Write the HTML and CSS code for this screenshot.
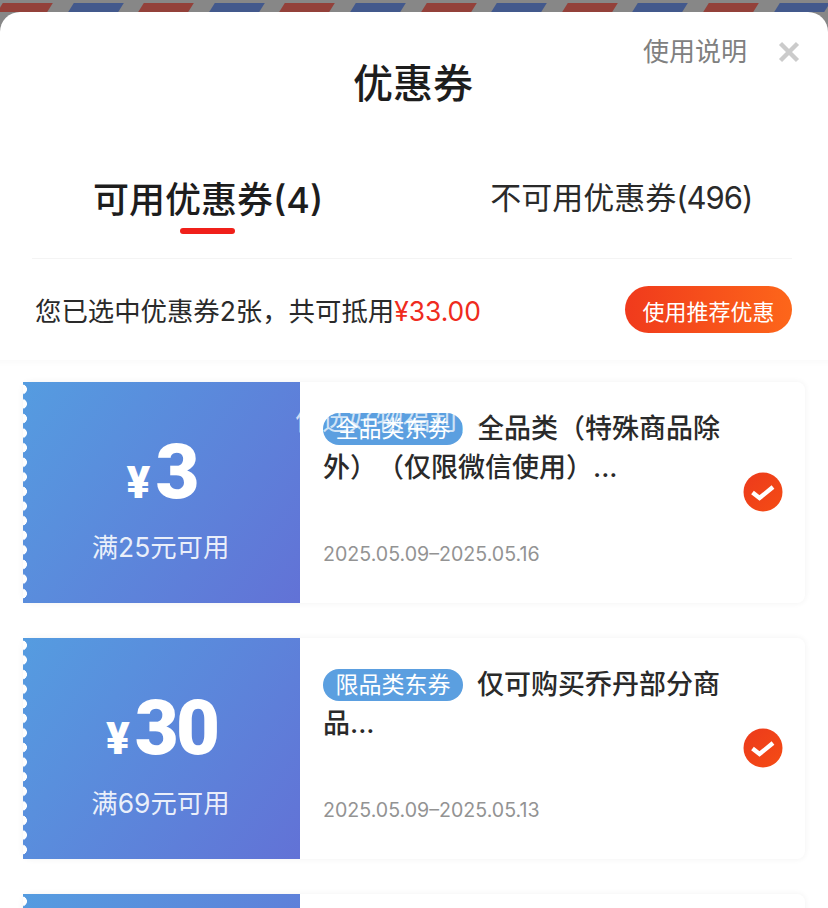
FILE: index.html
```html
<!DOCTYPE html>
<html lang="zh-CN">
<head>
  <meta charset="UTF-8">
  <meta name="viewport" content="width=device-width, initial-scale=1.0">
  <title>优惠券</title>
  <link rel="stylesheet" href="styles.css">
</head>
<body>
  <div class="top">
    <div class="airmail">
      <span class="red"></span><span class="blue"></span><span class="red"></span><span class="blue"></span><span class="red"></span><span class="blue"></span><span class="red"></span><span class="blue"></span><span class="red"></span><span class="blue"></span><span class="red"></span><span class="blue"></span>
    </div>

    <header class="sheet">
      <div class="head">
        <h1>优惠券</h1>
        <div class="head-links">
          <a class="help">使用说明</a>
          <svg class="close" width="22" height="22" viewBox="0 0 22 22"><path d="M2.5 2.5 19.5 19.5M19.5 2.5 2.5 19.5" stroke="#cbcbcb" stroke-width="4.4" fill="none"/></svg>
        </div>
      </div>

      <div class="tabs">
        <div class="tab active">可用优惠券(4)</div>
        <div class="tab">不可用优惠券<span>(496)</span></div>
      </div>

      <div class="summary">
        <p>您已选中优惠券2张，共可抵用<em>¥33.00</em></p>
        <button type="button">使用推荐优惠</button>
      </div>
    </header>
  </div>

  <main class="list">
    <div class="watermark">优选好物福利官</div>

    <div class="card">
      <div class="value">
        <div class="amount"><small>¥</small>3</div>
        <div class="limit">满25元可用</div>
      </div>
      <div class="info">
        <div class="name"><span class="tag">全品类东券</span>全品类（特殊商品除外）（仅限微信使用）...</div>
        <div class="date">2025.05.09–2025.05.16</div>
      </div>
      <svg class="check" width="40" height="40" viewBox="0 0 40 40"><defs><linearGradient id="c1" x1="0" y1="0" x2="1" y2="1"><stop offset="0" stop-color="#ec3a1c"/><stop offset="1" stop-color="#f54c14"/></linearGradient></defs><circle cx="20" cy="20" r="19.5" fill="url(#c1)"/><path d="M9.5 20.5 16.5 26 30 15" stroke="#fff" stroke-width="4.4" fill="none"/></svg>
    </div>

    <div class="card">
      <div class="value">
        <div class="amount"><small>¥</small>30</div>
        <div class="limit">满69元可用</div>
      </div>
      <div class="info">
        <div class="name"><span class="tag">限品类东券</span>仅可购买乔丹部分商品...</div>
        <div class="date">2025.05.09–2025.05.13</div>
      </div>
      <svg class="check" width="40" height="40" viewBox="0 0 40 40"><circle cx="20" cy="20" r="19.5" fill="url(#c1)"/><path d="M9.5 20.5 16.5 26 30 15" stroke="#fff" stroke-width="4.4" fill="none"/></svg>
    </div>

    <div class="card">
      <div class="value"></div>
      <div class="info"></div>
    </div>
  </main>
</body>
</html>
```

FILE: styles.css
```css
html, body {
  margin: 0;
  height: 908px;
  overflow: hidden;
}

body {
  position: relative;
  background-color: #fff;
  font-family: Inter, "Noto Sans CJK SC", sans-serif;
  color: #222;
  text-spacing-trim: space-all;
}

.top {
  background-color: #878787;
}

.airmail {
  display: flex;
  gap: 20.6px;
  height: 12px;
  padding: 3px 0 0;
  box-sizing: border-box;
  overflow: hidden;
}

.airmail span {
  flex: 0 0 50px;
  height: 9px;
  transform: skewX(-32deg);
}

.airmail .red {
  background-color: #93413a;
}

.airmail .blue {
  background-color: #43598c;
}

.sheet {
  height: 348px;
  box-sizing: border-box;
  background-color: #fff;
  border-radius: 20px 20px 0 0;
}

.head {
  position: relative;
  display: flex;
  justify-content: center;
  padding-top: 43px;
}

h1 {
  margin: 0 2px 0 0;
  font-size: 40px;
  line-height: 58px;
  font-weight: 500;
  color: #1d1d1d;
}

.head-links {
  position: absolute;
  top: 21px;
  right: 28px;
  display: flex;
  align-items: center;
  gap: 31px;
}

.help {
  font-size: 26px;
  line-height: 38px;
  color: #808080;
}

.tabs {
  display: flex;
  height: 110px;
  margin: 36px 36px 0 32px;
  padding: 0 0 0 61px;
  border-bottom: 1px solid #f4f4f4;
  box-sizing: border-box;
  gap: 167px;
}

.tab {
  position: relative;
  padding-top: 26px;
  font-size: 31px;
  line-height: 46px;
  color: #2a2a2a;
  white-space: nowrap;
}

.tab span {
  letter-spacing: -1px;
}

.tab.active {
  font-size: 36px;
  line-height: 52px;
  padding-top: 25px;
  font-weight: 500;
  color: #1d1d1d;
}

.tab.active::after {
  content: "";
  position: absolute;
  left: 87px;
  top: 79px;
  width: 55px;
  height: 6px;
  border-radius: 3px;
  background-color: #f0201a;
}

.summary {
  display: flex;
  align-items: center;
  justify-content: space-between;
  padding: 25px 36px 0;
}

.summary p {
  margin: 0 0 0 -1px;
  padding-top: 3px;
  font-size: 26.4px;
  line-height: 48px;
  color: #2a2a2a;
}

.summary em {
  font-style: normal;
  color: #ef2b20;
}

.summary button {
  width: 167px;
  height: 47px;
  padding: 0;
  border: none;
  border-radius: 24px;
  background: linear-gradient(90deg, #f03a1c, #fd661a);
  color: #fff;
  font-family: inherit;
  font-size: 22px;
}

.list {
  display: flex;
  flex-direction: column;
  gap: 35px;
  padding: 22px 23px 0;
  box-shadow: inset 0 10px 10px -10px rgba(0, 0, 0, 0.04);
}

.watermark {
  position: absolute;
  z-index: 2;
  left: 295px;
  top: 403px;
  font-size: 27px;
  line-height: 36px;
  color: rgba(255, 255, 255, 0.72);
  white-space: nowrap;
}

.card {
  display: flex;
  align-items: stretch;
  flex: 0 0 221px;
  position: relative;
  width: 782px;
  height: 221px;
  background-color: #fff;
  border-radius: 8px;
  box-shadow: 0 0 6px rgba(0, 0, 0, 0.06);
}

.value {
  position: relative;
  display: flex;
  flex-direction: column;
  align-items: center;
  width: 277px;
  flex-shrink: 0;
  color: #fff;
  background: linear-gradient(125deg, #559ce0, #6272d6);
}

/* scalloped left edge */
.value::before {
  content: "";
  position: absolute;
  left: 0;
  top: 0;
  bottom: 0;
  width: 6px;
  background: radial-gradient(circle at -1px 7.3px, #fff 4.6px, transparent 5.2px) 0 0 / 6px 14.6px repeat-y;
}

.amount {
  margin-top: 44px;
  font-family: Roboto, sans-serif;
  font-size: 76px;
  line-height: 92px;
  font-weight: 900;
  letter-spacing: -3px;
  white-space: nowrap;
}

.amount small {
  margin-right: 5px;
  font-size: 44px;
  letter-spacing: 0;
}

.limit {
  margin-top: -1px;
  margin-right: 2px;
  font-size: 26.4px;
  line-height: 38px;
  color: rgba(255, 255, 255, 0.88);
}

.info {
  flex: 1;
  min-width: 0;
  padding: 27px 0 0 23px;
}

.name {
  width: 404px;
  font-size: 27px;
  line-height: 39px;
  font-weight: 500;
  color: #2a2a2a;
}

.tag {
  display: inline-block;
  height: 32px;
  margin-right: 14px;
  padding: 0 12.5px;
  border-radius: 16px;
  background-color: #5b9fe0;
  color: #fff;
  font-size: 23px;
  line-height: 32px;
  font-weight: 400;
  vertical-align: 1px;
}

.date {
  margin-top: 52px;
  font-size: 19.6px;
  line-height: 30px;
  color: #939393;
}

.check {
  position: absolute;
  right: 22px;
  top: 90px;
}
```
